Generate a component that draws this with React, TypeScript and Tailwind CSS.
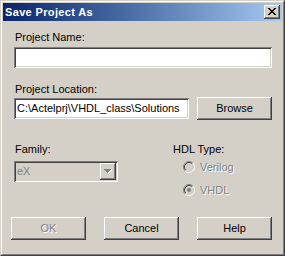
const raised =
  "shadow-[inset_-1px_-1px_#404040,inset_1px_1px_#ffffff,inset_-2px_-2px_#808080,inset_2px_2px_#d4d0c8]";
const sunken =
  "shadow-[inset_1px_1px_#808080,inset_-1px_-1px_#ffffff,inset_2px_2px_#404040,inset_-2px_-2px_#d4d0c8]";
const disabledText = "text-[#808080] [text-shadow:1px_1px_0_#ffffff]";

function CloseGlyph() {
  const rows = [
    [0, 1, 6, 7],
    [1, 2, 5, 6],
    [2, 3, 4, 5],
    [3, 4],
    [2, 3, 4, 5],
    [1, 2, 5, 6],
    [0, 1, 6, 7],
  ];
  return (
    <svg width="8" height="7" viewBox="0 0 8 7" shapeRendering="crispEdges">
      {rows.map((r, y) =>
        r.map((x) => <rect key={`${x}-${y}`} x={x} y={y} width="1" height="1" fill="#000" />)
      )}
    </svg>
  );
}

function Radio({ checked }: { checked?: boolean }) {
  return (
    <svg width="12" height="12" viewBox="0 0 12 12">
      <circle cx="6" cy="6" r="4.2" fill="#d4d0c8" />
      <path d="M9.89 2.11 A5.5 5.5 0 0 0 2.11 9.89" stroke="#808080" strokeWidth="1" fill="none" />
      <path d="M2.11 9.89 A5.5 5.5 0 0 0 9.89 2.11" stroke="#ffffff" strokeWidth="1" fill="none" />
      <path d="M9.18 2.82 A4.5 4.5 0 0 0 2.82 9.18" stroke="#404040" strokeWidth="1" fill="none" />
      <path d="M2.82 9.18 A4.5 4.5 0 0 0 9.18 2.82" stroke="#d4d0c8" strokeWidth="1" fill="none" />
      {checked && <circle cx="6" cy="6" r="2" fill="#808080" />}
    </svg>
  );
}

function Button({ label, disabled }: { label: string; disabled?: boolean }) {
  return (
    <div
      className={`w-[75px] h-[23px] bg-[#d4d0c8] ${raised} flex items-center justify-center ${
        disabled ? disabledText : "text-black"
      }`}
    >
      {label}
    </div>
  );
}

export default function App() {
  return (
    <div className="w-[285px] h-[256px] border border-t-[#d4d0c8] border-l-[#d4d0c8] border-r-[#404040] border-b-[#404040] bg-[#d4d0c8] font-['Liberation_Sans',Arial,sans-serif] text-[11px] leading-[13px] text-black select-none">
      <div className="h-full border border-t-white border-l-white border-r-[#808080] border-b-[#808080] p-px flex flex-col">
        <div className="h-[18px] flex items-center justify-between bg-linear-to-r from-[#0a246a] to-[#a6caf0] pl-[2px] pr-[2px]">
          <span className="text-white font-bold tracking-[0.35px]">Save Project As</span>
          <div className={`w-[16px] h-[14px] bg-[#d4d0c8] ${raised} flex items-start justify-start pl-[4px] pt-[3px]`}>
            <CloseGlyph />
          </div>
        </div>

        <div className="flex-1 flex flex-col pl-[11px] pr-[10px]">
          <div className="mt-[10px] pl-px">Project Name:</div>
          <div className={`mt-[3px] h-[21px] bg-white ${sunken}`} />

          <div className="mt-[15px] pl-px">Project Location:</div>
          <div className="mt-px h-[23px] flex items-center gap-[8px]">
            <div className={`w-[175px] h-[21px] bg-white ${sunken} flex items-center pl-[3px] whitespace-nowrap overflow-hidden`}>
              {"C:\\Actelprj\\VHDL_class\\Solutions"}
            </div>
            <Button label="Browse" />
          </div>

          <div className="mt-[23px] flex">
            <div className="w-[159px] flex flex-col">
              <div className="pl-px">Family:</div>
              <div className={`mt-[5px] w-[104px] h-[21px] bg-[#d4d0c8] ${sunken} flex items-stretch`}>
                <div className="flex-1 flex items-center pl-[3px] text-[#808080]">eX</div>
                <div className={`w-[16px] my-[2px] mr-[2px] ${raised} flex items-center justify-center`}>
                  <svg width="8" height="5" viewBox="0 0 8 5" shapeRendering="crispEdges">
                    <path d="M1 1h7v1H1zM2 2h5v1H2zM3 3h3v1H3zM4 4h1v1H4z" fill="#ffffff" />
                    <path d="M0 0h7v1H0zM1 1h5v1H1zM2 2h3v1H2zM3 3h1v1H3z" fill="#808080" />
                  </svg>
                </div>
              </div>
            </div>
            <div className="flex flex-col">
              <div>HDL Type:</div>
              <div className="mt-[3px] h-[16px] flex items-center pl-[10px] gap-[5px]">
                <Radio />
                <span className={disabledText}>Verilog</span>
              </div>
              <div className="mt-[7px] h-[16px] flex items-center pl-[10px] gap-[5px]">
                <Radio checked />
                <span className={disabledText}>VHDL</span>
              </div>
            </div>
          </div>

          <div className="mt-auto mb-[13px] -ml-[3px] flex gap-[18px]">
            <Button label="OK" disabled />
            <Button label="Cancel" />
            <Button label="Help" />
          </div>
        </div>
      </div>
    </div>
  );
}
